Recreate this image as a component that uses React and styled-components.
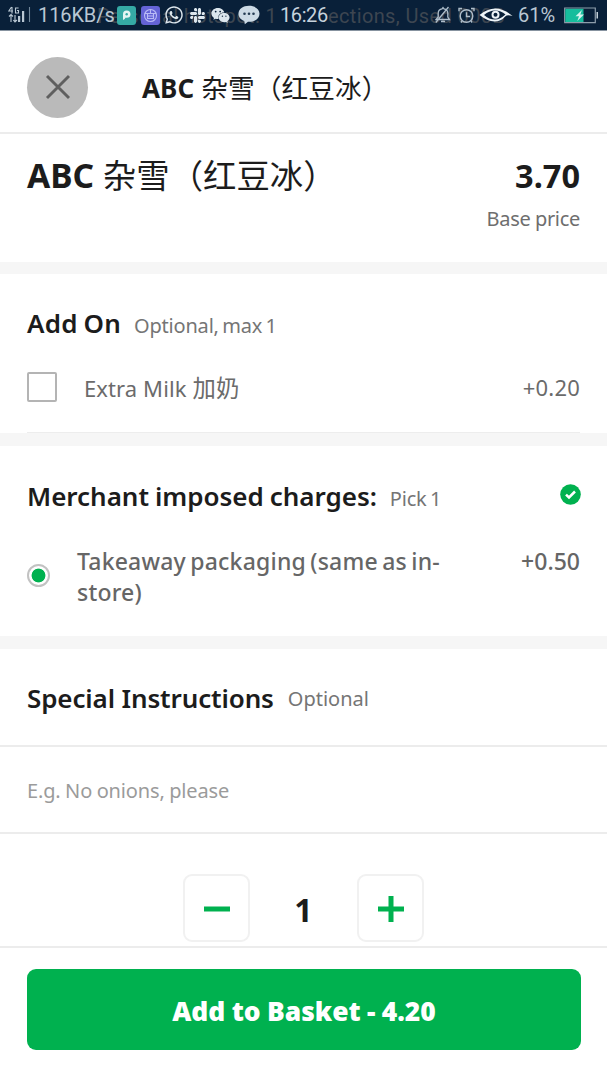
import { useState } from "react";
import styled, { createGlobalStyle } from "styled-components";
import { FaSlack, FaWeixin, FaWhatsapp } from "react-icons/fa";

export default function App() {
  const [quantity, setQuantity] = useState(1);
  const [extraMilk, setExtraMilk] = useState(false);
  const total = ((3.7 + 0.5 + (extraMilk ? 0.2 : 0)) * quantity).toFixed(2);
  return (
    <>
      <GlobalStyle />
      <Page>
        <StatusBar />
        <Header>
          <CloseButton aria-label="Close">
            <svg width="26" height="26" viewBox="0 0 26 26">
              <path
                d="M2 2 24 24M24 2 2 24"
                stroke="#5f5f5f"
                strokeWidth="2.9"
                fill="none"
              />
            </svg>
          </CloseButton>
          <HeaderTitle>
            ABC <Chinese $size={26.7}>杂雪（红豆冰）</Chinese>
          </HeaderTitle>
        </Header>
        <ItemSection>
          <ItemTitle>
            ABC <Chinese $size={33.4}>杂雪（红豆冰）</Chinese>
          </ItemTitle>
          <PriceColumn>
            <Price>3.70</Price>
            <BasePrice>Base price</BasePrice>
          </PriceColumn>
        </ItemSection>
        <Gap $height={12} />
        <AddOnSection>
          <SectionHead>
            <SectionTitle $spacing="0.2px" $wordSpacing="-1px">
              Add On
            </SectionTitle>
            <Hint $left={13}>Optional, max 1</Hint>
          </SectionHead>
          <Option onClick={() => setExtraMilk(!extraMilk)}>
            <Checkbox $checked={extraMilk} />
            <OptionName>
              Extra Milk <Chinese $size={23.4}>加奶</Chinese>
            </OptionName>
            <OptionPrice>+0.20</OptionPrice>
          </Option>
        </AddOnSection>
        <Gap $height={13} />
        <ChargesSection>
          <SectionHead>
            <SectionTitle $spacing="-0.02px" $wordSpacing="-0.8px">
              Merchant imposed charges:
            </SectionTitle>
            <Hint $left={13}>Pick 1</Hint>
            <DoneIcon width="21" height="21" viewBox="0 0 21 21">
              <circle cx="10.5" cy="10.5" r="10.3" fill="#00b14f" />
              <path
                d="m6 10.6 3 2.9 6-6"
                stroke="#fff"
                strokeWidth="2.5"
                fill="none"
              />
            </DoneIcon>
          </SectionHead>
          <ChargeOption>
            <Radio />
            <ChargeName>Takeaway packaging (same as in-store)</ChargeName>
            <ChargePrice>+0.50</ChargePrice>
          </ChargeOption>
        </ChargesSection>
        <Gap $height={13} />
        <InstructionsHead>
          <SectionTitle $spacing="-0.13px">Special Instructions</SectionTitle>
          <RaisedHint $left={14}>Optional</RaisedHint>
        </InstructionsHead>
        <InstructionsInput placeholder="E.g. No onions, please" />
        <QuantityRow>
          <QuantityButton
            aria-label="Less"
            onClick={() => setQuantity(Math.max(1, quantity - 1))}
          >
            <svg width="26" height="26" viewBox="0 0 26 26">
              <path d="M0 13H26" stroke="#00b14f" strokeWidth="5" />
            </svg>
          </QuantityButton>
          <Quantity>{quantity}</Quantity>
          <QuantityButton
            aria-label="More"
            onClick={() => setQuantity(quantity + 1)}
          >
            <svg width="26" height="26" viewBox="0 0 26 26">
              <path d="M0 13H26M13 0V26" stroke="#00b14f" strokeWidth="5" />
            </svg>
          </QuantityButton>
        </QuantityRow>
        <Footer>
          <BasketButton>Add to Basket - {total}</BasketButton>
        </Footer>
      </Page>
    </>
  );
}

function StatusBar() {
  return (
    <StatusRow>
      <Ticker>Personal hotspot: 1 connections, Used 000B</Ticker>
      <StatusLeft>
        <svg width="24" height="18" viewBox="0 0 24 18">
          <g fill="none" stroke="#b9c7d3" strokeWidth="1.1">
            <path d="M3.5 1 .8 5H5M4 1V7.5M10.6 2H7.5V7H10.5V4.5H9" />
            <path d="M3 8.5V16M1 10.5 3 8.5 5 10.5M7 9V16M5.3 14 7 16 9 14" />
            <path d="M21.5 1V16" stroke="#71879a" />
          </g>
          <path d="M10 10h2.2v6H10zM14 5h2.2v11H14z" fill="#b9c7d3" />
        </svg>
        <Speed>116KB/s</Speed>
        <AppBadge $color="#35aaa5">
          <svg width="19" height="19" viewBox="0 0 19 19">
            <path
              d="M6 14V8Q6 4.5 9.6 4.5 13.5 4.5 13.5 8.3 13.5 11.8 9.8 11.8H8.4Q8.2 13.3 6 14Z"
              fill="#e4f5f3"
            />
            <circle cx="9.7" cy="8.2" r="1.2" fill="#35aaa5" />
          </svg>
        </AppBadge>
        <AppBadge $color="#6463d6">
          <svg width="19" height="19" viewBox="0 0 19 19">
            <g fill="none" stroke="#b9bbf5" strokeWidth="1.1">
              <circle cx="9.5" cy="9.5" r="6" />
              <path d="M4 7.5H15M6.5 7.5V12.5H12.5V7.5M6.5 10H12.5M9.5 3.5V7.5" />
            </g>
          </svg>
        </AppBadge>
        <FaWhatsapp size={20} color="#dce6ed" />
        <FaSlack size={17} color="#dce6ed" />
        <FaWeixin size={19} color="#dce6ed" />
        <Bubble width="22" height="20" viewBox="0 0 22 20">
          <path
            d="M11 .8C5 .8.5 4 .5 8.7.5 12 2.8 14.7 6.3 16L6.8 19.2 10 16.8C17 17 21.5 13.5 21.5 8.7 21.5 4 17 .8 11 .8Z"
            fill="#ccdae5"
          />
          <g fill="#243b52">
            <circle cx="6.5" cy="8.8" r="1.3" />
            <circle cx="11" cy="8.8" r="1.3" />
            <circle cx="15.5" cy="8.8" r="1.3" />
          </g>
        </Bubble>
      </StatusLeft>
      <Clock>16:26</Clock>
      <StatusRight>
        <svg width="16" height="18" viewBox="0 0 16 18">
          <g fill="none" stroke="#aebdca" strokeWidth="1.3">
            <path d="M1 13.5H14.5L12.8 11V7Q12.6 3.5 9 2.8L8 1.5 7 2.8Q3.3 3.5 3.2 7V11ZM6 15.5H10M.8 16.5 13.5 1" />
          </g>
        </svg>
        <svg width="17" height="17" viewBox="0 0 17 17">
          <g fill="none" stroke="#aebdca" strokeWidth="1.4">
            <circle cx="8.5" cy="9" r="6.3" />
            <path d="M8.5 5.3V9.5H12M1 4.3V1.5H4M16 4.3V1.5H13M4 14 3 15.5M13 14 14 15.5" />
          </g>
        </svg>
        <Eye width="34" height="16" viewBox="0 0 34 16">
          <path
            d="M.5 8Q8 1.5 16.5 1.5 24.5 1.5 33.5 9 28 7.5 26.5 9.3 22 14.5 15.5 14.5 8.5 14.3.5 8Z"
            fill="#edf4f8"
          />
          <path d="M5 8Q10 3.5 16 3.5 22 3.5 26.5 7.5 21 12.5 16 12.5 10 12.5 5 8Z" fill="#092039" />
          <circle cx="16.5" cy="7.8" r="4" fill="#edf4f8" />
          <circle cx="16.5" cy="7.8" r="2" fill="#092039" />
        </Eye>
        <Percent>61%</Percent>
        <svg width="35" height="17" viewBox="0 0 35 17">
          <path d="M.7 1H31.3V15.7H.7Z" fill="none" stroke="#8e9dab" strokeWidth="1.2" />
          <path d="M1.3 1.8H19.5V15H1.3Z" fill="#16bd9d" />
          <path d="M32.5 5H34V11.5H32.5" fill="#c4d0d9" />
          <path d="M18 3 11.5 9.3H15L13.3 14 20 7.5H16.3Z" fill="#d5f3ef" />
        </svg>
      </StatusRight>
    </StatusRow>
  );
}

const GlobalStyle = createGlobalStyle`
  * {
    box-sizing: border-box;
  }
  body {
    margin: 0;
    background: #fff;
    font-family: "Noto Sans", "Noto Sans CJK SC", sans-serif;
    color: #1c1c1c;
  }
  button {
    padding: 0;
    font-family: inherit;
    cursor: pointer;
  }
  svg {
    display: block;
    flex-shrink: 0;
  }
`;

const Page = styled.main`
  display: flex;
  flex-direction: column;
  width: 607px;
  height: 1080px;
  overflow: hidden;
`;

const StatusRow = styled.div`
  position: relative;
  display: grid;
  grid-template-columns: 276px 1fr 172px;
  align-items: center;
  height: 31px;
  flex-shrink: 0;
  background: #092039;
  border-bottom: 1px solid #8793a0;
  font-family: Roboto, sans-serif;
  font-size: 20px;
  color: #b9c7d3;
`;

/* notification text fading out under the status icons */
const Ticker = styled.span`
  position: absolute;
  left: 97px;
  top: 5px;
  line-height: 23px;
  white-space: nowrap;
  letter-spacing: 0.38px;
  color: #3d4651;
`;

const StatusLeft = styled.div`
  position: relative;
  display: flex;
  align-items: center;
  gap: 5px;
  padding-left: 8px;
`;

const StatusRight = styled.div`
  position: relative;
  display: flex;
  align-items: center;
  gap: 7px;
`;

const Speed = styled.span`
  width: 75px;
  padding-left: 1px;
  letter-spacing: -0.1px;
`;

const AppBadge = styled.span`
  width: 19px;
  height: 19px;
  border-radius: 3px;
  background: ${({ $color }) => $color};

  & + svg {
    margin-left: -1px;
  }
`;

const Bubble = styled.svg`
  margin-left: 3px;
`;

const Clock = styled.span`
  position: relative;
  justify-self: start;
  padding-left: 4px;
  letter-spacing: -0.4px;
  background: #092039;
  color: #c6d2dc;
`;

const Eye = styled.svg`
  margin-left: -3px;
`;

const Percent = styled.span`
  width: 39px;
  margin-left: -2px;
`;

const Chinese = styled.span`
  font-family: "Noto Sans CJK SC", sans-serif;
  font-size: ${({ $size }) => $size}px;
  font-weight: 400;
`;

const Header = styled.header`
  display: flex;
  align-items: center;
  height: 103px;
  flex-shrink: 0;
  padding: 0 27px 1px;
  border-bottom: 2px solid #ececec;
`;

const CloseButton = styled.button`
  display: flex;
  align-items: center;
  justify-content: center;
  width: 61px;
  height: 61px;
  margin-top: 12px;
  border: none;
  border-radius: 50%;
  background: #bababa;
`;

const HeaderTitle = styled.h1`
  margin: 12px 0 0 54px;
  font-size: 26px;
  line-height: 36px;
  font-weight: 700;
  letter-spacing: 0.1px;
`;

const ItemSection = styled.section`
  display: flex;
  justify-content: space-between;
  height: 128px;
  flex-shrink: 0;
  padding: 18px 27px 0;
`;

const ItemTitle = styled.h2`
  margin: -1px 0 0;
  font-size: 33.6px;
  line-height: 46px;
  font-weight: 700;
`;

const PriceColumn = styled.div`
  display: flex;
  flex-direction: column;
  align-items: flex-end;
`;

const Price = styled.span`
  margin-top: 1px;
  font-size: 32.5px;
  line-height: 46px;
  font-weight: 700;
`;

const BasePrice = styled.span`
  margin-top: 6px;
  font-size: 20px;
  line-height: 28px;
  letter-spacing: -0.3px;
  word-spacing: -0.5px;
  color: #6e6e6e;
`;

const Gap = styled.div`
  height: ${({ $height }) => $height}px;
  flex-shrink: 0;
  background: #f6f6f6;
`;

const AddOnSection = styled.section`
  height: 159px;
  flex-shrink: 0;
  margin: 0 27px;
  padding-top: 30px;
  border-bottom: 1px solid #ededed;
`;

const ChargesSection = styled.section`
  height: 190px;
  flex-shrink: 0;
  padding: 31px 27px 0;
`;

const SectionHead = styled.div`
  display: flex;
  align-items: baseline;
  height: 38px;
`;

const SectionTitle = styled.h3`
  margin: 0;
  font-size: 26px;
  line-height: 38px;
  font-weight: 600;
  letter-spacing: ${({ $spacing }) => $spacing || "0"};
  word-spacing: ${({ $wordSpacing }) => $wordSpacing || "0"};
  white-space: nowrap;
`;

const Hint = styled.span`
  margin-left: ${({ $left }) => $left}px;
  font-size: 20px;
  letter-spacing: -0.2px;
  word-spacing: -1.6px;
  color: #757575;
  white-space: nowrap;
`;

const RaisedHint = styled(Hint)`
  letter-spacing: 0;
  transform: translateY(-2px);
`;

const DoneIcon = styled.svg`
  align-self: flex-start;
  margin: 7px -1px 0 auto;
`;

const Option = styled.div`
  display: flex;
  align-items: center;
  height: 36px;
  margin-top: 27px;
  font-size: 22px;
  line-height: 36px;
  color: #6b6b6b;
`;

const Checkbox = styled.span`
  width: 30px;
  height: 30px;
  border: 2px solid #b4b4b4;
  border-radius: 2px;
  background: ${({ $checked }) => ($checked ? "#00b14f" : "#fff")};
`;

const OptionName = styled.span`
  margin-left: 27px;
  letter-spacing: 0.1px;
`;

const OptionPrice = styled.span`
  margin-left: auto;
  letter-spacing: 0.2px;
`;

const ChargeOption = styled.div`
  display: flex;
  margin-top: 31px;
  font-size: 23px;
  line-height: 31px;
  font-weight: 500;
  color: #666;
`;

const Radio = styled.span`
  width: 23px;
  height: 23px;
  margin-top: 18px;
  border: 2px solid #c2c2c2;
  border-radius: 50%;
  background: radial-gradient(circle, #00b14f 6.5px, #fff 7.3px);
`;

const ChargeName = styled.span`
  width: 385px;
  margin-left: 27px;
  letter-spacing: 0.2px;
  word-spacing: -1.8px;
`;

const ChargePrice = styled.span`
  margin-left: auto;
`;

const InstructionsHead = styled.div`
  display: flex;
  align-items: baseline;
  height: 98px;
  flex-shrink: 0;
  padding: 30px 27px 0;
  border-bottom: 2px solid #ececec;
`;

const InstructionsInput = styled.input`
  height: 87px;
  flex-shrink: 0;
  padding: 2px 27px 0;
  border: none;
  border-bottom: 2px solid #ececec;
  outline: none;
  font-family: inherit;
  font-size: 20px;
  letter-spacing: -0.15px;
  word-spacing: -0.5px;
  &::placeholder {
    color: #9b9b9b;
    opacity: 1;
  }
`;

const QuantityRow = styled.div`
  display: flex;
  justify-content: center;
  height: 112px;
  flex-shrink: 0;
  padding-top: 40px;
`;

const QuantityButton = styled.button`
  display: flex;
  align-items: center;
  justify-content: center;
  width: 67px;
  height: 68px;
  padding: 1px 0 0 1px;
  border: 2px solid #f1f1f1;
  border-radius: 9px;
  background: #fff;
`;

const Quantity = styled.span`
  width: 107px;
  font-size: 32px;
  line-height: 71px;
  font-weight: 700;
  text-align: center;
`;

const Footer = styled.footer`
  height: 134px;
  flex-shrink: 0;
  padding: 21px 27px 0;
  border-top: 2px solid #ececec;
`;

const BasketButton = styled.button`
  width: 554px;
  height: 81px;
  padding-top: 3px;
  border: none;
  border-radius: 9px;
  background: #00b14f;
  font-size: 26.4px;
  font-weight: 900;
  word-spacing: -0.5px;
  color: #fff;
`;
